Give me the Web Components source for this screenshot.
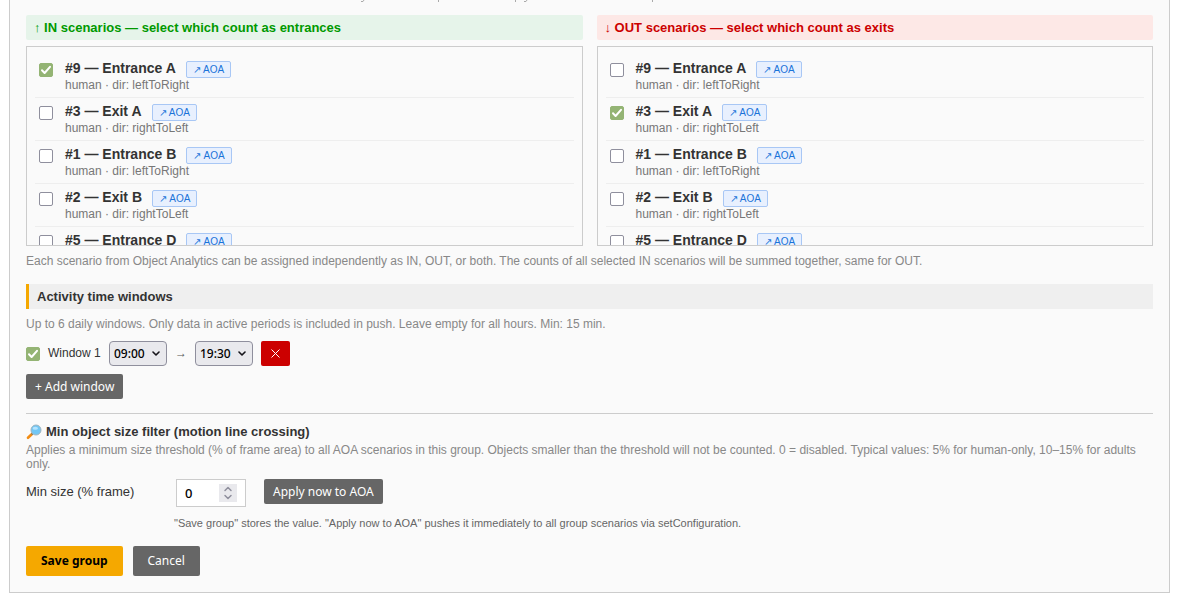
<!DOCTYPE html>
<html lang="en">
<head>
<meta charset="utf-8">
<title>Scenario group</title>
<style>
html{background:#fff}
body{margin:0;padding:0 10px 10px 9px;font:13px/15px "Liberation Sans",Arial,sans-serif;color:#333}
</style>
</head>
<body>
<group-card>
  <scenario-columns>
    <scenario-picker kind="in" checked-id="9">↑ IN scenarios — select which count as entrances</scenario-picker>
    <scenario-picker kind="out" checked-id="3">↓ OUT scenarios — select which count as exits</scenario-picker>
  </scenario-columns>
  <help-text class="after-list">Each scenario from Object Analytics can be assigned independently as IN, OUT, or both. The counts of all selected IN scenarios will be summed together, same for OUT.</help-text>
  <time-windows>Activity time windows</time-windows>
  <size-filter>Min object size filter (motion line crossing)</size-filter>
  <form-actions></form-actions>
</group-card>
<script>
const controls = `
*{box-sizing:border-box}
button{font:12px/15px "Noto Sans","Open Sans",sans-serif;color:#fff;background:#666;border:0;border-radius:2px;padding:5px 9px;cursor:pointer;white-space:nowrap}
input[type=checkbox]{appearance:none;flex:none;width:14px;height:14px;margin:0;border:1px solid #8f8f9d;border-radius:2px;background:#fff}
input[type=checkbox]:checked{border-color:#94b474;background:#94b474 url("data:image/svg+xml,%3Csvg xmlns='http://www.w3.org/2000/svg' viewBox='0 0 12 12'%3E%3Cpath d='M2 6.3 4.6 9 10 2.8' fill='none' stroke='white' stroke-width='2' stroke-linecap='round' stroke-linejoin='round'/%3E%3C/svg%3E") center/12px 12px no-repeat}
`;
function define(name, css, html) {
  customElements.define(name, class extends HTMLElement {
    constructor() {
      super();
      this.attachShadow({mode: 'open'}).innerHTML =
        `<style>${controls}${css}</style>` + (typeof html === 'function' ? html(this) : html);
    }
  });
}

define('group-card', `
:host{display:block;border:1px solid #ccc;border-top:0;background:#fafafa;padding:0 16px 16px}
.lead{display:block;height:15px;width:100%}
`, `<svg class="lead" aria-hidden="true" fill="none" stroke="#aaa"><path d="M361 1.5h2l1-1.5M438.500 0v2M515.500 0v2M524 1.500h2l1-1.500M652.500 0v2" transform="translate(-26 0)"/></svg><slot></slot>`);

define('scenario-columns', `
:host{display:grid;grid-template-columns:1fr 1fr;gap:14px}
`, `<slot></slot>`);

const scenarios = [[9,'Entrance A','leftToRight'],[3,'Exit A','rightToLeft'],[1,'Entrance B','leftToRight'],
  [2,'Exit B','rightToLeft'],[5,'Entrance D','leftToRight']];
define('scenario-picker', `
:host{display:block;min-width:0}
h3{margin:0 0 6px;padding:5px 8px;border-radius:2px;font-size:13px;line-height:15px}
:host([kind=in]) h3{background:#e6f4ea;color:#090}
:host([kind=out]) h3{background:#fde8e6;color:#c00}
ul{list-style:none;margin:0;padding:8px;height:200px;border:1px solid #ccc;overflow:auto;scrollbar-width:none}
li{display:flex;gap:12px;height:43px;padding:5px 4px;border-bottom:1px solid #eee}
input[type=checkbox]{margin-top:3px}
.title{display:flex;gap:10px;height:18px}
label{font-weight:bold;font-size:14px;line-height:16px}
a{height:17px;margin-top:1px;padding:2px 6px;border:1px solid #a8c7f5;border-radius:2px;background:#e8f0fe;color:#1a73d9;font-size:10px;line-height:12px;text-decoration:none}
.meta{font-size:12px;line-height:14px;color:#777}
`, el => `<h3><slot></slot></h3><ul>${scenarios.map(([id, name, dir]) => `
<li><input type="checkbox" id="s${id}" ${el.getAttribute('checked-id') == id ? 'checked' : ''}>
<div><div class="title"><label for="s${id}">#${id} — ${name}</label><a href="#scenario-${id}">↗ AOA</a></div>
<div class="meta">human · dir: ${dir}</div></div></li>`).join('')}</ul>`);

define('help-text', `
:host{display:block;font-size:12px;line-height:14px;color:#888}
:host(.after-list){margin-top:8px}
`, `<slot></slot>`);

const hours = (id, label, value) => `<span class="select"><select id="${id}" aria-label="${label}"><option>${value}</option></select>
<svg width="10" height="6" viewBox="0 0 10 6" aria-hidden="true"><path d="m2 1 3 3 3-3" fill="none" stroke="#15141a" stroke-width="1.600" stroke-linecap="round" stroke-linejoin="round"/></svg></span>`;
define('time-windows', `
:host{display:block;margin-top:16px;padding-bottom:14px;border-bottom:1px solid #ccc}
h3{margin:0 0 8px;padding:5px 8px;border-left:3px solid #f5a800;background:#efefef;font-size:13px;line-height:15px}
.row{display:flex;align-items:center;gap:8px;margin:10px 0 8px}
label{font-size:12px;width:53px;white-space:nowrap}
.select{display:grid;align-items:center;width:58px}
.select>*{grid-area:1/1}
select{appearance:none;width:100%;height:25px;margin:0;padding:0 4px;border:1px solid #8f8f9d;border-radius:4px;background:#e9e9ed;color:#000;font:500 12px/15px "Noto Sans","Open Sans",sans-serif}
.select svg{justify-self:end;margin-right:6px;pointer-events:none}
.arrow{width:12px;font-size:12px;text-align:center;color:#555}
.remove{display:grid;place-items:center;width:29px;height:25px;padding:0;background:#c00}
`, `<h3><slot></slot></h3>
<help-text>Up to 6 daily windows. Only data in active periods is included in push. Leave empty for all hours. Min: 15 min.</help-text>
<div class="row"><input type="checkbox" id="w1" checked><label for="w1">Window 1</label>${hours('from', 'Start', '09:00')}<span class="arrow">→</span>${hours('to', 'End', '19:30')}
<button class="remove" aria-label="Remove window 1"><svg width="9" height="9" viewBox="0 0 9 9"><path d="m.5.5 8 8m0-8-8 8" stroke="#fff" stroke-width="1"/></svg></button></div>
<button>+ Add window</button>`);

define('size-filter', `
:host{display:block;margin-top:10px}
h3{display:flex;align-items:center;gap:4px;height:16px;margin:0 0 3px;font-size:13px;line-height:16px}
.row{display:flex;align-items:flex-start;margin-top:8px}
label{width:150px;line-height:25px}
.number{display:grid;align-items:center;width:70px;margin-right:18px}
.number>*{grid-area:1/1}
input[type=number]{appearance:textfield;width:100%;height:28px;margin:0;padding:0 8px;border:1px solid #ccc;background:#fff;color:#000;font:500 13px/15px "Noto Sans","Open Sans",sans-serif}
input::-webkit-inner-spin-button{appearance:none;margin:0}
.number svg{justify-self:end;margin-right:9px;background:#e9e9ed;pointer-events:none}
.note{margin:10px 0 0 148px;font-size:11px;line-height:13px;color:#666}
`, `<h3><svg width="16" height="16" viewBox="0 0 16 16" aria-hidden="true"><path d="m6 10-4 3.800" stroke="#f28c13" stroke-width="2.600" stroke-linecap="round"/><path d="m7.200 9-1.500 1.400" stroke="#607d8b" stroke-width="1.500"/><circle cx="10" cy="6" r="5" fill="#72c7f4" stroke="#9fb4bf" stroke-width="1"/><ellipse cx="9.300" cy="4.200" rx="2.700" ry="1.500" fill="#b4e4ff"/></svg><span><slot></slot></span></h3>
<help-text>Applies a minimum size threshold (% of frame area) to all AOA scenarios in this group. Objects smaller than the threshold will not be counted. 0 = disabled. Typical values: 5% for human-only, 10–15% for adults only.</help-text>
<div class="row"><label for="min">Min size (% frame)</label><span class="number"><input type="number" id="min" value="0" min="0" max="100">
<svg width="18" height="18" viewBox="0 0 18 18" aria-hidden="true"><path d="m6 6.500 3-3 3 3m-6 5 3 3 3-3" fill="none" stroke="#8f8f9d" stroke-width="1.500" stroke-linecap="round" stroke-linejoin="round"/></svg></span><button>Apply now to AOA</button></div>
<div class="note">"Save group" stores the value. "Apply now to AOA" pushes it immediately to all group scenarios via setConfiguration.</div>`);

define('form-actions', `
:host{display:flex;gap:10px;margin-top:16px}
button{height:30px;padding:7px 15px;line-height:16px}
.save{background:#f5a800;color:#000;font-weight:bold}
`, `<button class="save">Save group</button><button>Cancel</button>`);
</script>
</body>
</html>
